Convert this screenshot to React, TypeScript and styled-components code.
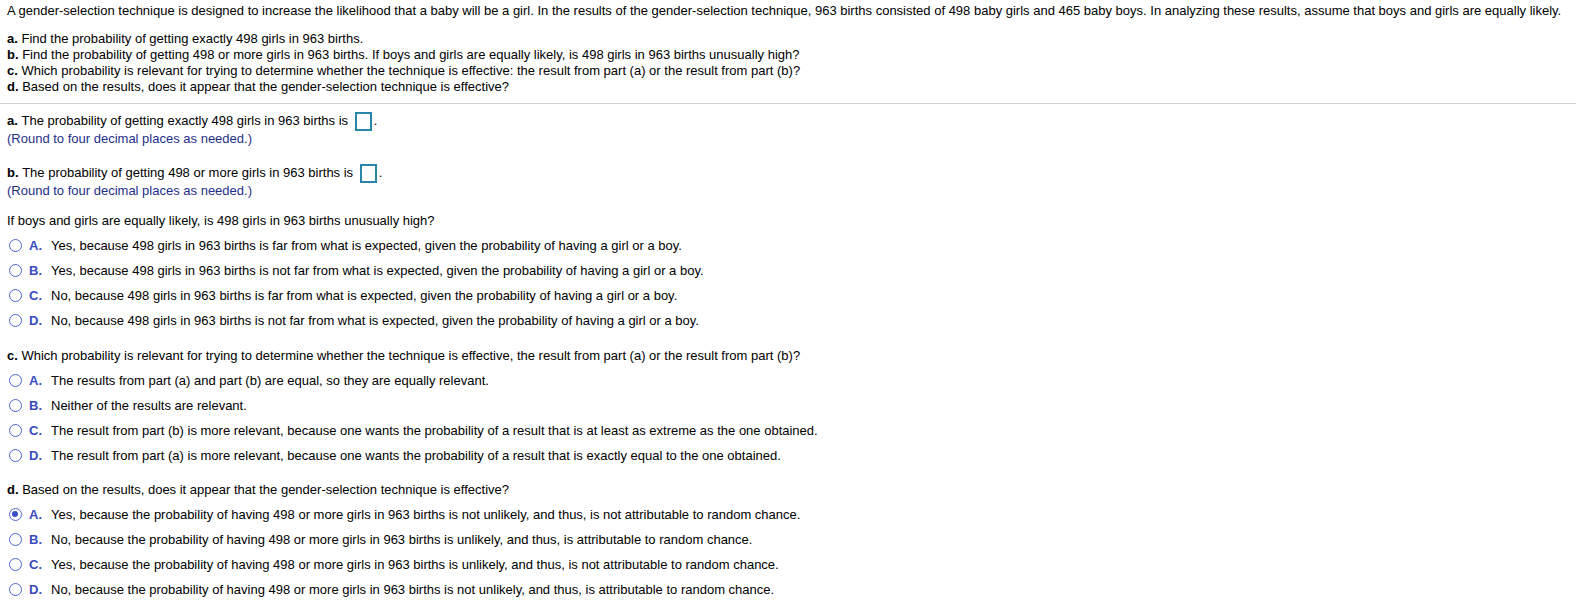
import React from "react";
import styled, { createGlobalStyle } from "styled-components";

const GlobalStyle = createGlobalStyle`
  html, body {
    margin: 0;
    padding: 0;
    background: #ffffff;
  }
  body {
    font-family: "Liberation Sans", Arial, sans-serif;
    font-size: 13px;
    color: #000000;
  }
`;

interface Option {
  letter: string;
  text: string;
  checked?: boolean;
}

const partB: Option[] = [
  { letter: "A.", text: "Yes, because 498 girls in 963 births is far from what is expected, given the probability of having a girl or a boy." },
  { letter: "B.", text: "Yes, because 498 girls in 963 births is not far from what is expected, given the probability of having a girl or a boy." },
  { letter: "C.", text: "No, because 498 girls in 963 births is far from what is expected, given the probability of having a girl or a boy." },
  { letter: "D.", text: "No, because 498 girls in 963 births is not far from what is expected, given the probability of having a girl or a boy." },
];

const partC: Option[] = [
  { letter: "A.", text: "The results from part (a) and part (b) are equal, so they are equally relevant." },
  { letter: "B.", text: "Neither of the results are relevant." },
  { letter: "C.", text: "The result from part (b) is more relevant, because one wants the probability of a result that is at least as extreme as the one obtained." },
  { letter: "D.", text: "The result from part (a) is more relevant, because one wants the probability of a result that is exactly equal to the one obtained." },
];

const partD: Option[] = [
  { letter: "A.", text: "Yes, because the probability of having 498 or more girls in 963 births is not unlikely, and thus, is not attributable to random chance.", checked: true },
  { letter: "B.", text: "No, because the probability of having 498 or more girls in 963 births is unlikely, and thus, is attributable to random chance." },
  { letter: "C.", text: "Yes, because the probability of having 498 or more girls in 963 births is unlikely, and thus, is not attributable to random chance." },
  { letter: "D.", text: "No, because the probability of having 498 or more girls in 963 births is not unlikely, and thus, is attributable to random chance." },
];

const Choices = ({ options }: { options: Option[] }) => (
  <div>
    {options.map((o) => (
      <Row key={o.letter}>
        <Radio $checked={!!o.checked} />
        <Letter>{o.letter}</Letter>
        <span>{o.text}</span>
      </Row>
    ))}
  </div>
);

export default function App() {
  return (
    <Page>
      <GlobalStyle />
      <Header>
        <Intro>
          A gender-selection technique is designed to increase the likelihood that a baby will be a girl. In the results of the
          gender-selection technique, 963 births consisted of 498 baby girls and 465 baby boys. In analyzing these results, assume that
          boys and girls are equally likely.
        </Intro>
        <Parts>
          <Line><b>a.</b> Find the probability of getting exactly 498 girls in 963 births.</Line>
          <Line><b>b.</b> Find the probability of getting 498 or more girls in 963 births. If boys and girls are equally likely, is 498 girls in 963 births unusually high?</Line>
          <Line><b>c.</b> Which probability is relevant for trying to determine whether the technique is effective: the result from part (a) or the result from part (b)?</Line>
          <Line><b>d.</b> Based on the results, does it appear that the gender-selection technique is effective?</Line>
        </Parts>
      </Header>
      <Divider />
      <Body>
        <Answer>
          <AnswerLine><b>a.</b>&nbsp;The probability of getting exactly 498 girls in 963 births is <Box />.</AnswerLine>
          <Hint>(Round to four decimal places as needed.)</Hint>
        </Answer>
        <Answer $gap={17}>
          <AnswerLine><b>b.</b>&nbsp;The probability of getting 498 or more girls in 963 births is <Box />.</AnswerLine>
          <Hint>(Round to four decimal places as needed.)</Hint>
        </Answer>
        <Section>
          <Question>If boys and girls are equally likely, is 498 girls in 963 births unusually high?</Question>
          <Choices options={partB} />
        </Section>
        <Section $gap={15}>
          <Question><b>c.</b> Which probability is relevant for trying to determine whether the technique is effective, the result from part (a) or the result from part (b)?</Question>
          <Choices options={partC} />
        </Section>
        <Section $gap={14}>
          <Question><b>d.</b> Based on the results, does it appear that the gender-selection technique is effective?</Question>
          <Choices options={partD} />
        </Section>
      </Body>
    </Page>
  );
}

const Page = styled.div`
  width: 1576px;
  min-height: 604px;
  line-height: 16px;
`;

const Header = styled.div`
  padding: 3px 7px 0;
`;

const Intro = styled.p`
  margin: 0;
  white-space: nowrap;
`;

const Parts = styled.div`
  margin-top: 12px;
`;

const Line = styled.div`
  height: 16px;
  white-space: nowrap;
`;

const Divider = styled.hr`
  margin: 8px 0 0;
  border: none;
  height: 1px;
  background: #cfcfd8;
`;

const Body = styled.div`
  padding: 0 7px;
`;

const Answer = styled.div<{ $gap?: number }>`
  margin-top: ${(p) => p.$gap ?? 8}px;
`;

const AnswerLine = styled.div`
  display: flex;
  align-items: center;
  height: 18px;
  white-space: pre;
`;

const Box = styled.span`
  display: inline-block;
  box-sizing: border-box;
  width: 17px;
  height: 19px;
  margin: 0 2px 0 3px;
  border: 2px solid #2a86a8;
`;

const Hint = styled.div`
  margin-top: 1px;
  height: 16px;
  color: #1e2f8a;
`;

const Section = styled.div<{ $gap?: number }>`
  margin-top: ${(p) => p.$gap ?? 14}px;
`;

const Question = styled.div`
  height: 16px;
  margin-bottom: 4px;
  white-space: nowrap;
`;

const Row = styled.div`
  display: flex;
  align-items: center;
  height: 25px;
  white-space: nowrap;
`;

const Radio = styled.span<{ $checked: boolean }>`
  position: relative;
  box-sizing: border-box;
  flex: none;
  width: 13px;
  height: 13px;
  margin-left: 2px;
  border: 1.5px solid #4f66d4;
  border-radius: 50%;
  &::after {
    content: "";
    display: ${(p) => (p.$checked ? "block" : "none")};
    position: absolute;
    left: 2px;
    top: 2px;
    width: 6px;
    height: 6px;
    border-radius: 50%;
    background: #3b4fc4;
  }
`;

const Letter = styled.span`
  flex: none;
  width: 22px;
  margin-left: 7px;
  font-weight: bold;
  color: #3a4bbd;
`;
